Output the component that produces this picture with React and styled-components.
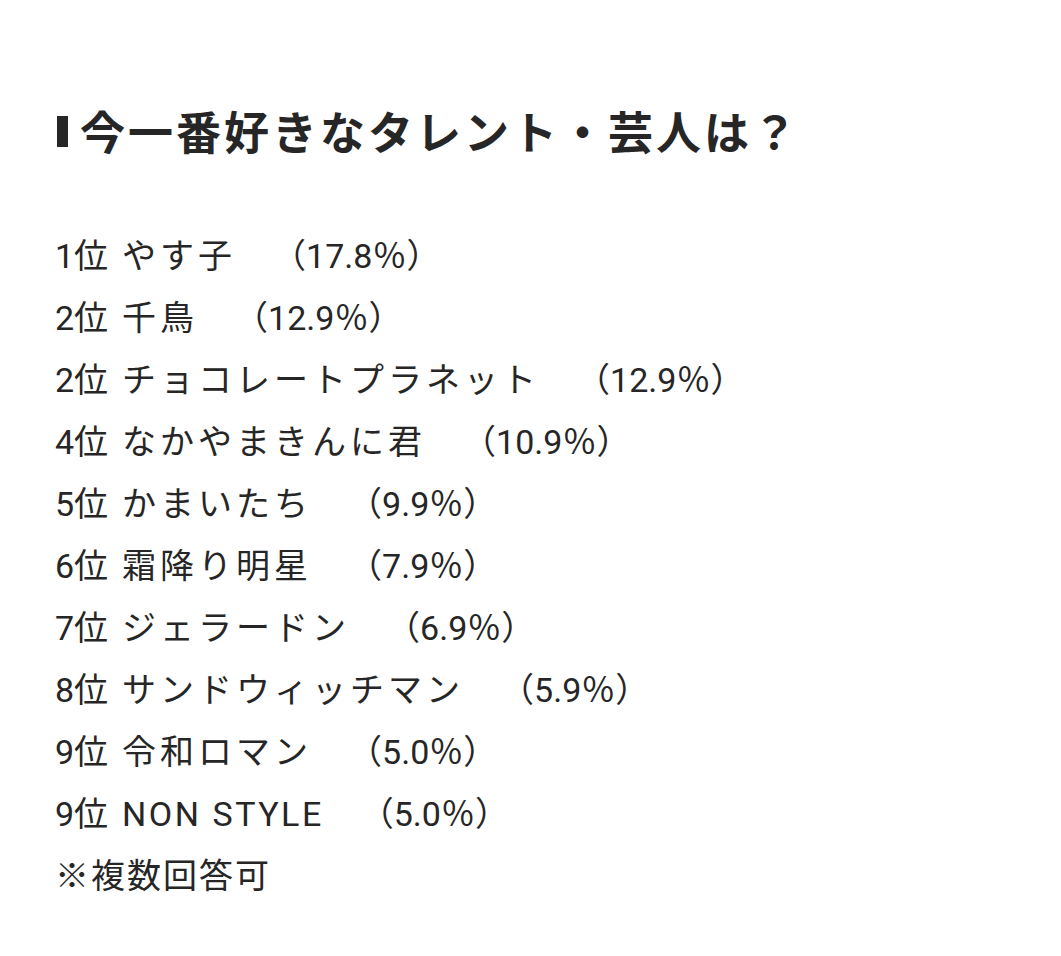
import React from "react";
import styled, { createGlobalStyle } from "styled-components";

const Global = createGlobalStyle`
  html, body { margin: 0; padding: 0; background: #ffffff; }
  body { font-family: Roboto, "Noto Sans CJK JP", sans-serif; color: #262626; }
`;

const Page = styled.div`
  width: 1061px;
  min-height: 956px;
  box-sizing: border-box;
  padding: 98px 0 0 55px;
  background: #fff;
`;

const Title = styled.h2`
  margin: 0 0 61px 0;
  display: flex;
  align-items: center;
  font-family: "Noto Sans CJK JP", sans-serif;
  font-weight: 700;
  font-size: 45px;
  line-height: 66px;
  letter-spacing: 3px;
  color: #262626;
`;

const Marker = styled.span`
  display: inline-block;
  flex: 0 0 11px;
  width: 11px;
  height: 31px;
  background: #262626;
  margin: 0 12px 0 2px;
`;

const List = styled.div`
  display: flex;
  flex-direction: column;
`;

const Row = styled.div`
  display: flex;
  align-items: baseline;
  font-size: 34px;
  font-weight: 400;
  line-height: 62px;
  white-space: pre;
`;

const Rank = styled.span`
  letter-spacing: 0;
  margin-right: 14px;
`;

const Name = styled.span`
  letter-spacing: ${(p) => (p.$latin ? "2.5px" : "4px")};
`;

const Pct = styled.span`
  margin-left: 36px;
  letter-spacing: 0;
`;

const Note = styled.div`
  font-size: 34px;
  line-height: 58px;
  letter-spacing: 2px;
  font-family: "Noto Sans CJK JP", sans-serif;
`;

const rows = [
  ["1位", "やす子", "17.8"],
  ["2位", "千鳥", "12.9"],
  ["2位", "チョコレートプラネット", "12.9"],
  ["4位", "なかやまきんに君", "10.9"],
  ["5位", "かまいたち", "9.9"],
  ["6位", "霜降り明星", "7.9"],
  ["7位", "ジェラードン", "6.9"],
  ["8位", "サンドウィッチマン", "5.9"],
  ["9位", "令和ロマン", "5.0"],
  ["9位", "NON STYLE", "5.0", true],
];

export default function App() {
  return (
    <Page>
      <Global />
      <Title>
        <Marker />
        今一番好きなタレント・芸人は？
      </Title>
      <List>
        {rows.map(([rank, name, pct, latin], i) => (
          <Row key={i}>
            <Rank>{rank}</Rank>
            <Name $latin={latin}>{name}</Name>
            <Pct>（{pct}％）</Pct>
          </Row>
        ))}
        <Note>※複数回答可</Note>
      </List>
    </Page>
  );
}
